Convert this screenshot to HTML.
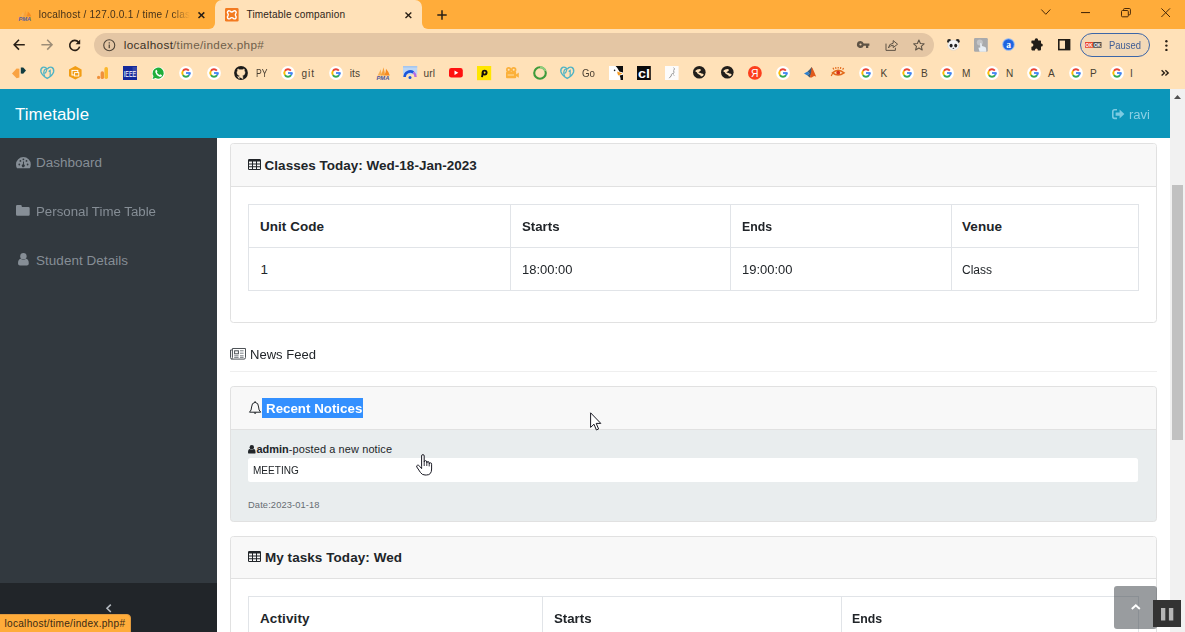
<!DOCTYPE html>
<html lang="en">
<head>
<meta charset="utf-8">
<title>Timetable companion</title>
<style>
html,body{margin:0;padding:0;}
body{width:1185px;height:632px;overflow:hidden;position:relative;background:#fff;font-family:"Liberation Sans",sans-serif;}
.a{position:absolute;box-sizing:border-box;}
.t{position:absolute;white-space:pre;font-family:"Liberation Sans",sans-serif;}
svg{position:absolute;overflow:visible;}
/* chrome */
#tabstrip{left:0;top:0;width:1185px;height:29px;background:#ffac3a;}
#toolbar{left:0;top:29px;width:1185px;height:59.5px;background:#ffe1b8;}
#tab2{left:214.5px;top:0;width:207.5px;height:29.5px;background:#ffe1b8;border-radius:7px 7px 0 0;}
#omni{left:94px;top:33px;width:840px;height:24px;border-radius:12px;background:#e4c6a4;}
#paused{left:1080px;top:33px;width:70px;height:24px;border-radius:12px;background:#f3d9b7;border:1px solid #3c66a8;}
/* page */
#navbar{left:0;top:88.5px;width:1170px;height:49.5px;background:#0c96ba;}
#sidebar{left:0;top:138px;width:217px;height:494px;background:#32393f;}
#sbfoot{left:0;top:583px;width:217px;height:49px;background:#212529;}
.card{border:1px solid #e1e1e1;border-radius:3.5px;background:#fff;overflow:hidden;}
.ch{left:0;top:0;width:100%;background:#f8f8f8;border-bottom:1px solid #e1e1e1;}
.tbl{border:1px solid #e1e4e8;}
.vl{width:1px;background:#e1e4e8;}
.hl{height:1px;background:#e1e4e8;}
#scroll{left:1170px;top:88.5px;width:15px;height:544px;background:#f1f1f1;}
#thumb{left:1172px;top:185px;width:11px;height:254.5px;background:#c1c1c1;}
#status{left:-1px;top:614px;width:132px;height:20px;background:#ffac3a;border:1px solid #e09a3e;border-radius:0 4px 0 0;}
#totop{left:1114px;top:586px;width:43px;height:43px;border-radius:3px;background:rgba(52,58,64,.5);}
#pause{left:1153px;top:600px;width:28px;height:27px;background:#333;}
</style>
</head>
<body>
<!-- browser chrome -->
<div class="a" id="tabstrip"></div>
<div class="a" id="toolbar"></div>
<div class="a" id="tab2"></div>
<div class="a" style="left:208.5px;top:23px;width:6px;height:6px;background:#ffe1b8;"></div>
<div class="a" style="left:208.5px;top:23px;width:6px;height:6px;background:#ffac3a;border-radius:0 0 6px 0;"></div>
<div class="a" style="left:422px;top:23px;width:6px;height:6px;background:#ffe1b8;"></div>
<div class="a" style="left:422px;top:23px;width:6px;height:6px;background:#ffac3a;border-radius:0 0 0 6px;"></div>
<div class="a" id="omni"></div>
<div class="a" id="paused"></div>

<!-- page -->
<div class="a" id="navbar"></div>
<div class="a" id="sidebar"></div>
<div class="a" id="sbfoot"></div>

<!-- card 1 -->
<div class="a card" style="left:230px;top:143px;width:927px;height:179.5px;">
  <div class="a ch" style="height:43px;"></div>
</div>
<div class="a tbl" style="left:248px;top:204px;width:891px;height:87px;"></div>
<div class="a hl" style="left:248px;top:246.5px;width:891px;height:1.5px;"></div>
<div class="a vl" style="left:510px;top:204px;height:87px;"></div>
<div class="a vl" style="left:730px;top:204px;height:87px;"></div>
<div class="a vl" style="left:951px;top:204px;height:87px;"></div>

<!-- news feed -->
<div class="a" style="left:230px;top:371px;width:927px;height:1px;background:#efefef;"></div>

<!-- card 2 -->
<div class="a card" style="left:230px;top:386px;width:927px;height:135.5px;background:#e9edee;">
  <div class="a ch" style="height:43.2px;"></div>
</div>
<div class="a" style="left:262px;top:397.5px;width:100.75px;height:20.5px;background:#3390ff;"></div>
<div class="a" style="left:248px;top:457.5px;width:890px;height:24.5px;background:#fff;border-radius:2.5px;"></div>

<!-- card 3 -->
<div class="a card" style="left:230px;top:536px;width:927px;height:140px;border-radius:3.5px 3.5px 0 0;">
  <div class="a ch" style="height:42.2px;"></div>
</div>
<div class="a tbl" style="left:248px;top:596px;width:891px;height:60px;"></div>
<div class="a vl" style="left:542px;top:596px;height:40px;"></div>
<div class="a vl" style="left:841px;top:596px;height:40px;"></div>

<!-- scrollbar -->
<div class="a" id="scroll"></div>
<div class="a" id="thumb"></div>

<!-- floating -->
<div class="a" id="totop"></div>
<div class="a" id="pause"></div>
<div class="a" id="status"></div>

<svg style="left:1040.5px;top:9px" width="10" height="6" viewBox="0 0 10 6"><path d="M0.3 0.5 L4.8 5.3 L9.3 0.5" fill="none" stroke="#4a2a08" stroke-width="1"/></svg>
<svg style="left:1081px;top:11.7px" width="9" height="1.2" viewBox="0 0 9 1.2"><rect width="9" height="1.1" fill="#4a2a08"/></svg>
<svg style="left:1120.5px;top:7.5px" width="10" height="9.5" viewBox="0 0 10 9.5"><rect x="0.5" y="2.5" width="6.8" height="6.3" rx="1" fill="none" stroke="#4a2a08" stroke-width="1"/><path d="M2.6 2.3 V1.5 Q2.6 0.5 3.6 0.5 H8.4 Q9.4 0.5 9.4 1.5 V5.8 Q9.4 6.8 8.4 6.8 H7.6" fill="none" stroke="#4a2a08" stroke-width="1"/></svg>
<svg style="left:1160.5px;top:7.5px" width="9.5" height="9.5" viewBox="0 0 9.5 9.5"><path d="M0.4 0.4 L9 9 M9 0.4 L0.4 9" stroke="#4a2a08" stroke-width="1" fill="none"/></svg>
<svg style="left:17.5px;top:10px" width="14" height="11" viewBox="0 0 14 11"><path d="M2.4 6.6 Q4.4 3.4 5 1.6 Q5.8 4.2 5.8 6.6Z" fill="#f9b155"/><path d="M5.2 6.6 Q7 2.6 7.4 0.2 Q8.6 3.6 8.8 6.6Z" fill="#f6a13a"/><path d="M8.4 6.6 Q10 3.4 9.8 1.6 Q12.8 4.2 13.4 6.6Z" fill="#f78b1f"/><text x="0.4" y="10.6" font-family="Liberation Sans, sans-serif" font-size="4.6" font-weight="700" font-style="italic" fill="#5a5f9e" textLength="12.8" lengthAdjust="spacingAndGlyphs">PMA</text></svg>
<svg style="left:198px;top:11.7px" width="7" height="6.5" viewBox="0 0 7 6.5"><path d="M0.5 0.4 L6.3 6 M6.3 0.4 L0.5 6" stroke="#2a2016" stroke-width="1.5" fill="none"/></svg>
<svg style="left:225px;top:7.9px" width="13.6" height="13.6" viewBox="0 0 13.6 13.6"><rect width="13.6" height="13.6" rx="1.4" fill="#f37a20"/><path d="M2.6 3.6 Q3.6 2.2 5 3 Q6.8 4.9 8.6 3 Q10 2.2 11 3.6 Q11.6 4.8 10.6 5.8 Q10.1 6.8 10.6 7.8 Q11.6 8.8 11 10 Q10 11.4 8.6 10.6 Q6.8 8.7 5 10.6 Q3.6 11.4 2.6 10 Q2 8.8 3 7.8 Q3.5 6.8 3 5.8 Q2 4.8 2.6 3.6Z" fill="none" stroke="#fff" stroke-width="1.4"/></svg>
<svg style="left:405px;top:11.7px" width="7" height="6.5" viewBox="0 0 7 6.5"><path d="M0.5 0.4 L6.3 6 M6.3 0.4 L0.5 6" stroke="#2a2016" stroke-width="1.4" fill="none"/></svg>
<svg style="left:436.5px;top:10px" width="10" height="10" viewBox="0 0 10 10"><path d="M5 0.3 V9.7 M0.3 5 H9.7" stroke="#2a2016" stroke-width="1.5" fill="none"/></svg>
<svg style="left:13px;top:39.4px" width="12.2" height="11.4" viewBox="0 0 12.2 11.4"><path d="M11.8 5.7 H1.6 M6 0.8 L1.2 5.7 L6 10.6" stroke="#2a2016" stroke-width="1.6" fill="none"/></svg>
<svg style="left:41px;top:39.4px" width="12.2" height="11.4" viewBox="0 0 12.2 11.4"><path d="M0.4 5.7 H10.6 M6.2 0.8 L11 5.7 L6.2 10.6" stroke="#9d8d77" stroke-width="1.6" fill="none"/></svg>
<svg style="left:68px;top:38.8px" width="13" height="13" viewBox="0 0 13 13"><path d="M10.6 3.2 A5 5 0 1 0 11.6 7.6" stroke="#2a2016" stroke-width="1.6" fill="none"/><path d="M12.2 0.6 V5.2 H7.6Z" fill="#2a2016"/></svg>
<svg style="left:102.5px;top:38.8px" width="12.5" height="12.5" viewBox="0 0 12.5 12.5"><circle cx="6.25" cy="6.25" r="5.5" fill="none" stroke="#4d4336" stroke-width="1.1"/><rect x="5.65" y="5.5" width="1.2" height="3.7" fill="#4d4336"/><rect x="5.65" y="3.3" width="1.2" height="1.2" fill="#4d4336"/></svg>
<svg style="left:857px;top:41px" width="12.5" height="7.2" viewBox="0 0 12.5 7.2"><path fill-rule="evenodd" d="M3.5 0 A3.5 3.5 0 0 1 6.7 2.4 H12.4 V4.7 H11.3 V6.9 H9 V4.7 H6.7 A3.5 3.5 0 1 1 3.5 0Z M2.4 3.5 a1.1 1.1 0 1 0 2.2 0 a1.1 1.1 0 1 0 -2.2 0Z" fill="#5e5345"/></svg>
<svg style="left:885px;top:39px" width="13.2" height="12.2" viewBox="0 0 13.2 12.2"><path d="M1 4.6 V11.4 H10.4 V8.8" fill="none" stroke="#5e5345" stroke-width="1"/><path d="M3.4 9 Q3.8 4.6 8.2 4.2 V1.6 L12.6 5.2 L8.2 8.6 V6.2 Q5.2 6.2 3.4 9Z" fill="none" stroke="#5e5345" stroke-width="1"/></svg>
<svg style="left:912.7px;top:39.2px" width="11.8" height="11.6" viewBox="0 0 11.8 11.6"><path d="M5.9 1 L7.4 4.5 L11.1 4.8 L8.3 7.3 L9.2 11 L5.9 9 L2.6 11 L3.5 7.3 L0.7 4.8 L4.4 4.5Z" fill="none" stroke="#5e5345" stroke-width="1.1" stroke-linejoin="round"/></svg>
<svg style="left:947.3px;top:39.2px" width="12.8" height="11.4" viewBox="0 0 12.8 11.4"><circle cx="2.2" cy="2.2" r="2.1" fill="#222"/><circle cx="10.6" cy="2.2" r="2.1" fill="#222"/><ellipse cx="6.4" cy="6.2" rx="5.6" ry="5.1" fill="#f4f4f4" stroke="#cfcfcf" stroke-width="0.4"/><ellipse cx="4.1" cy="6.6" rx="1.5" ry="1.9" fill="#222"/><ellipse cx="8.7" cy="6.6" rx="1.5" ry="1.9" fill="#222"/><ellipse cx="6.4" cy="9.3" rx="0.9" ry="0.6" fill="#444"/></svg>
<svg style="left:974.2px;top:38px" width="13.8" height="13.8" viewBox="0 0 13.8 13.8"><rect width="13.8" height="13.8" rx="1.2" fill="#a9aaac"/><circle cx="5.8" cy="4.4" r="3" fill="#c4c5c7"/><path d="M6.2 5.2 Q7.2 4.6 7.6 5.8 L8 8 L11.2 9 Q12.4 9.6 12.2 13.8 H5.6 Q4.6 11 4.4 9.8 Q5 9 6.2 9.8Z" fill="#e8eef4"/></svg>
<svg style="left:1002.3px;top:38.3px" width="13" height="13" viewBox="0 0 13 13"><circle cx="6.5" cy="6.5" r="6.3" fill="#8fb6f2"/><circle cx="6.5" cy="6.5" r="5.3" fill="#1d64e0"/><text x="6.5" y="9.6" text-anchor="middle" font-family="Liberation Serif, serif" font-size="9.5" font-weight="700" fill="#fff">a</text></svg>
<svg style="left:1030.3px;top:38.4px" width="12.8" height="12.8" viewBox="0 0 12.8 12.8"><path d="M4.6 2.4 Q4.6 0.2 6.4 0.2 Q8.2 0.2 8.2 2.4 H10.4 Q11 2.4 11 3 V5.4 Q12.8 5.2 12.8 7 Q12.8 8.8 11 8.6 V11.6 Q11 12.4 10.2 12.4 H7.8 Q8 10.4 6.4 10.4 Q4.8 10.4 5 12.4 H2.2 Q1.4 12.4 1.4 11.6 V8.8 Q3.4 9 3.4 7 Q3.4 5 1.4 5.2 V3 Q1.4 2.4 2 2.4Z" fill="#221d17"/></svg>
<svg style="left:1058.2px;top:39px" width="12.4" height="11.4" viewBox="0 0 12.4 11.4"><rect x="0.8" y="0.8" width="10.8" height="9.8" fill="none" stroke="#221d17" stroke-width="1.6"/><rect x="7" y="0.8" width="4.6" height="9.8" fill="#221d17"/></svg>
<svg style="left:1084.5px;top:42px" width="16.5" height="5.8" viewBox="0 0 16.5 5.8"><rect width="8.2" height="5.8" fill="#e8442b"/><rect x="8.2" width="8.3" height="5.8" fill="#4a4a4a"/><text x="0.6" y="4.7" font-family="Liberation Sans, sans-serif" font-size="4.6" font-weight="700" fill="#fff">OK</text><text x="8.9" y="4.7" font-family="Liberation Sans, sans-serif" font-size="4.6" font-weight="700" fill="#fff">OK</text></svg>
<svg style="left:1165px;top:39.5px" width="3" height="11.5" viewBox="0 0 3 11.5"><circle cx="1.4" cy="1.3" r="1.2" fill="#2a2016"/><circle cx="1.4" cy="5.6" r="1.2" fill="#2a2016"/><circle cx="1.4" cy="9.9" r="1.2" fill="#2a2016"/></svg>
<svg style="left:178.75px;top:65.75px" width="14" height="14" viewBox="0 0 14 14"><circle cx="7" cy="7" r="6.9" fill="#fff"/><path d="M9.83 4.62 A3.7 3.7 0 0 0 3.97 4.88" fill="none" stroke="#ea4335" stroke-width="1.9"/><path d="M3.97 4.88 A3.7 3.7 0 0 0 3.97 9.12" fill="none" stroke="#fbbc05" stroke-width="1.9"/><path d="M3.97 9.12 A3.7 3.7 0 0 0 10.03 9.12" fill="none" stroke="#34a853" stroke-width="1.9"/><path d="M10.03 9.12 A3.7 3.7 0 0 0 10.70 7.00" fill="none" stroke="#4285f4" stroke-width="1.9"/><rect x="7" y="6.1" width="4.6" height="1.8" fill="#4285f4"/></svg>
<svg style="left:206.6px;top:65.75px" width="14" height="14" viewBox="0 0 14 14"><circle cx="7" cy="7" r="6.9" fill="#fff"/><path d="M9.83 4.62 A3.7 3.7 0 0 0 3.97 4.88" fill="none" stroke="#ea4335" stroke-width="1.9"/><path d="M3.97 4.88 A3.7 3.7 0 0 0 3.97 9.12" fill="none" stroke="#fbbc05" stroke-width="1.9"/><path d="M3.97 9.12 A3.7 3.7 0 0 0 10.03 9.12" fill="none" stroke="#34a853" stroke-width="1.9"/><path d="M10.03 9.12 A3.7 3.7 0 0 0 10.70 7.00" fill="none" stroke="#4285f4" stroke-width="1.9"/><rect x="7" y="6.1" width="4.6" height="1.8" fill="#4285f4"/></svg>
<svg style="left:281px;top:65.75px" width="14" height="14" viewBox="0 0 14 14"><circle cx="7" cy="7" r="6.9" fill="#fff"/><path d="M9.83 4.62 A3.7 3.7 0 0 0 3.97 4.88" fill="none" stroke="#ea4335" stroke-width="1.9"/><path d="M3.97 4.88 A3.7 3.7 0 0 0 3.97 9.12" fill="none" stroke="#fbbc05" stroke-width="1.9"/><path d="M3.97 9.12 A3.7 3.7 0 0 0 10.03 9.12" fill="none" stroke="#34a853" stroke-width="1.9"/><path d="M10.03 9.12 A3.7 3.7 0 0 0 10.70 7.00" fill="none" stroke="#4285f4" stroke-width="1.9"/><rect x="7" y="6.1" width="4.6" height="1.8" fill="#4285f4"/></svg>
<svg style="left:328.75px;top:65.75px" width="14" height="14" viewBox="0 0 14 14"><circle cx="7" cy="7" r="6.9" fill="#fff"/><path d="M9.83 4.62 A3.7 3.7 0 0 0 3.97 4.88" fill="none" stroke="#ea4335" stroke-width="1.9"/><path d="M3.97 4.88 A3.7 3.7 0 0 0 3.97 9.12" fill="none" stroke="#fbbc05" stroke-width="1.9"/><path d="M3.97 9.12 A3.7 3.7 0 0 0 10.03 9.12" fill="none" stroke="#34a853" stroke-width="1.9"/><path d="M10.03 9.12 A3.7 3.7 0 0 0 10.70 7.00" fill="none" stroke="#4285f4" stroke-width="1.9"/><rect x="7" y="6.1" width="4.6" height="1.8" fill="#4285f4"/></svg>
<svg style="left:775.5px;top:65.75px" width="14" height="14" viewBox="0 0 14 14"><circle cx="7" cy="7" r="6.9" fill="#fff"/><path d="M9.83 4.62 A3.7 3.7 0 0 0 3.97 4.88" fill="none" stroke="#ea4335" stroke-width="1.9"/><path d="M3.97 4.88 A3.7 3.7 0 0 0 3.97 9.12" fill="none" stroke="#fbbc05" stroke-width="1.9"/><path d="M3.97 9.12 A3.7 3.7 0 0 0 10.03 9.12" fill="none" stroke="#34a853" stroke-width="1.9"/><path d="M10.03 9.12 A3.7 3.7 0 0 0 10.70 7.00" fill="none" stroke="#4285f4" stroke-width="1.9"/><rect x="7" y="6.1" width="4.6" height="1.8" fill="#4285f4"/></svg>
<svg style="left:859px;top:65.75px" width="14" height="14" viewBox="0 0 14 14"><circle cx="7" cy="7" r="6.9" fill="#fff"/><path d="M9.83 4.62 A3.7 3.7 0 0 0 3.97 4.88" fill="none" stroke="#ea4335" stroke-width="1.9"/><path d="M3.97 4.88 A3.7 3.7 0 0 0 3.97 9.12" fill="none" stroke="#fbbc05" stroke-width="1.9"/><path d="M3.97 9.12 A3.7 3.7 0 0 0 10.03 9.12" fill="none" stroke="#34a853" stroke-width="1.9"/><path d="M10.03 9.12 A3.7 3.7 0 0 0 10.70 7.00" fill="none" stroke="#4285f4" stroke-width="1.9"/><rect x="7" y="6.1" width="4.6" height="1.8" fill="#4285f4"/></svg>
<svg style="left:899.75px;top:65.75px" width="14" height="14" viewBox="0 0 14 14"><circle cx="7" cy="7" r="6.9" fill="#fff"/><path d="M9.83 4.62 A3.7 3.7 0 0 0 3.97 4.88" fill="none" stroke="#ea4335" stroke-width="1.9"/><path d="M3.97 4.88 A3.7 3.7 0 0 0 3.97 9.12" fill="none" stroke="#fbbc05" stroke-width="1.9"/><path d="M3.97 9.12 A3.7 3.7 0 0 0 10.03 9.12" fill="none" stroke="#34a853" stroke-width="1.9"/><path d="M10.03 9.12 A3.7 3.7 0 0 0 10.70 7.00" fill="none" stroke="#4285f4" stroke-width="1.9"/><rect x="7" y="6.1" width="4.6" height="1.8" fill="#4285f4"/></svg>
<svg style="left:940.4px;top:65.75px" width="14" height="14" viewBox="0 0 14 14"><circle cx="7" cy="7" r="6.9" fill="#fff"/><path d="M9.83 4.62 A3.7 3.7 0 0 0 3.97 4.88" fill="none" stroke="#ea4335" stroke-width="1.9"/><path d="M3.97 4.88 A3.7 3.7 0 0 0 3.97 9.12" fill="none" stroke="#fbbc05" stroke-width="1.9"/><path d="M3.97 9.12 A3.7 3.7 0 0 0 10.03 9.12" fill="none" stroke="#34a853" stroke-width="1.9"/><path d="M10.03 9.12 A3.7 3.7 0 0 0 10.70 7.00" fill="none" stroke="#4285f4" stroke-width="1.9"/><rect x="7" y="6.1" width="4.6" height="1.8" fill="#4285f4"/></svg>
<svg style="left:984.75px;top:65.75px" width="14" height="14" viewBox="0 0 14 14"><circle cx="7" cy="7" r="6.9" fill="#fff"/><path d="M9.83 4.62 A3.7 3.7 0 0 0 3.97 4.88" fill="none" stroke="#ea4335" stroke-width="1.9"/><path d="M3.97 4.88 A3.7 3.7 0 0 0 3.97 9.12" fill="none" stroke="#fbbc05" stroke-width="1.9"/><path d="M3.97 9.12 A3.7 3.7 0 0 0 10.03 9.12" fill="none" stroke="#34a853" stroke-width="1.9"/><path d="M10.03 9.12 A3.7 3.7 0 0 0 10.70 7.00" fill="none" stroke="#4285f4" stroke-width="1.9"/><rect x="7" y="6.1" width="4.6" height="1.8" fill="#4285f4"/></svg>
<svg style="left:1026.5px;top:65.75px" width="14" height="14" viewBox="0 0 14 14"><circle cx="7" cy="7" r="6.9" fill="#fff"/><path d="M9.83 4.62 A3.7 3.7 0 0 0 3.97 4.88" fill="none" stroke="#ea4335" stroke-width="1.9"/><path d="M3.97 4.88 A3.7 3.7 0 0 0 3.97 9.12" fill="none" stroke="#fbbc05" stroke-width="1.9"/><path d="M3.97 9.12 A3.7 3.7 0 0 0 10.03 9.12" fill="none" stroke="#34a853" stroke-width="1.9"/><path d="M10.03 9.12 A3.7 3.7 0 0 0 10.70 7.00" fill="none" stroke="#4285f4" stroke-width="1.9"/><rect x="7" y="6.1" width="4.6" height="1.8" fill="#4285f4"/></svg>
<svg style="left:1068.75px;top:65.75px" width="14" height="14" viewBox="0 0 14 14"><circle cx="7" cy="7" r="6.9" fill="#fff"/><path d="M9.83 4.62 A3.7 3.7 0 0 0 3.97 4.88" fill="none" stroke="#ea4335" stroke-width="1.9"/><path d="M3.97 4.88 A3.7 3.7 0 0 0 3.97 9.12" fill="none" stroke="#fbbc05" stroke-width="1.9"/><path d="M3.97 9.12 A3.7 3.7 0 0 0 10.03 9.12" fill="none" stroke="#34a853" stroke-width="1.9"/><path d="M10.03 9.12 A3.7 3.7 0 0 0 10.70 7.00" fill="none" stroke="#4285f4" stroke-width="1.9"/><rect x="7" y="6.1" width="4.6" height="1.8" fill="#4285f4"/></svg>
<svg style="left:1109.6px;top:65.75px" width="14" height="14" viewBox="0 0 14 14"><circle cx="7" cy="7" r="6.9" fill="#fff"/><path d="M9.83 4.62 A3.7 3.7 0 0 0 3.97 4.88" fill="none" stroke="#ea4335" stroke-width="1.9"/><path d="M3.97 4.88 A3.7 3.7 0 0 0 3.97 9.12" fill="none" stroke="#fbbc05" stroke-width="1.9"/><path d="M3.97 9.12 A3.7 3.7 0 0 0 10.03 9.12" fill="none" stroke="#34a853" stroke-width="1.9"/><path d="M10.03 9.12 A3.7 3.7 0 0 0 10.70 7.00" fill="none" stroke="#4285f4" stroke-width="1.9"/><rect x="7" y="6.1" width="4.6" height="1.8" fill="#4285f4"/></svg>
<svg style="left:12px;top:67px" width="14.5" height="11.5" viewBox="0 0 14.5 11.5"><path d="M0 6.4 L4.6 1.4 L7.4 1.8 L7.4 10.6 L4.6 11.2Z" fill="#f9a343"/><path d="M8.8 0.6 L11.2 0.4 L14 3.6 L11.2 6.8 L8.8 6.6Z" fill="#123c40"/></svg>
<svg style="left:40px;top:66px" width="14.5" height="13.2" viewBox="0 0 14.5 13.2"><path d="M7.2 3.2 Q5.2 0.4 2.6 1.4 Q0.2 2.8 1 6 Q2.2 9.6 7.2 12.4 Q12.4 9.6 13.6 6 Q14.2 2.6 11.8 1.4 Q9.2 0.4 7.2 3.2" fill="none" stroke="#4fb3c4" stroke-width="1.4"/><path d="M4.6 10 Q2.8 6.4 4.8 3.6 Q6.2 2.6 6.6 4.4 Q6 7 4.6 7.4 M8.6 5.4 L10.2 4.4 V10.4" fill="none" stroke="#4fb3c4" stroke-width="1.2"/></svg>
<svg style="left:560px;top:66px" width="14.5" height="13.2" viewBox="0 0 14.5 13.2"><path d="M7.2 3.2 Q5.2 0.4 2.6 1.4 Q0.2 2.8 1 6 Q2.2 9.6 7.2 12.4 Q12.4 9.6 13.6 6 Q14.2 2.6 11.8 1.4 Q9.2 0.4 7.2 3.2" fill="none" stroke="#4fb3c4" stroke-width="1.4"/><path d="M4.6 10 Q2.8 6.4 4.8 3.6 Q6.2 2.6 6.6 4.4 Q6 7 4.6 7.4 M8.6 5.4 L10.2 4.4 V10.4" fill="none" stroke="#4fb3c4" stroke-width="1.2"/></svg>
<svg style="left:68.5px;top:66px" width="12.6" height="13.6" viewBox="0 0 12.6 13.6"><path d="M6.3 0 L12.6 3.4 V10.2 L6.3 13.6 L0 10.2 V3.4Z" fill="#f29d14"/><rect x="3" y="4.4" width="5.8" height="4.6" fill="none" stroke="#fff" stroke-width="1"/><rect x="5.6" y="6.6" width="4.2" height="3.4" fill="#f29d14" stroke="#fff" stroke-width="0.9"/></svg>
<svg style="left:97px;top:66.7px" width="11.2" height="12" viewBox="0 0 11.2 12"><rect x="7.4" y="0" width="3.6" height="12" rx="1.7" fill="#fbb72c"/><rect x="3.6" y="4.3" width="3.4" height="7.7" rx="1.6" fill="#f0913a"/><circle cx="1.6" cy="10.4" r="1.6" fill="#f0913a"/></svg>
<svg style="left:123px;top:66px" width="14" height="14" viewBox="0 0 14 14"><rect width="14" height="14" fill="#15299a"/><rect x="9.5" y="1" width="4.5" height="10" fill="#5a68b8" opacity="0.45"/><text x="0.8" y="11.2" font-family="Liberation Sans, sans-serif" font-size="9.6" font-weight="400" fill="#fff" textLength="12.4" lengthAdjust="spacingAndGlyphs">IEEE</text></svg>
<svg style="left:151px;top:65.8px" width="14" height="14.4" viewBox="0 0 14 14.4"><path d="M0.6 13.9 L1.7 10.4 A6.4 6.4 0 1 1 4.3 12.9Z" fill="#fff"/><path d="M1.6 12.9 L2.5 10.2 A5.6 5.6 0 1 1 4.6 12.1Z" fill="#1fae3a"/><path d="M4.9 4 Q5.6 3.4 6 4.4 L6.4 5.4 Q6.5 5.9 5.9 6.4 Q6.8 8.2 8.6 8.9 Q9.2 8.2 9.6 8.4 L10.8 9 Q11.2 9.4 10.6 10.2 Q9.6 11.2 7.6 10.2 Q5.2 8.9 4.4 6.4 Q4 4.8 4.9 4Z" fill="#fff"/></svg>
<svg style="left:234px;top:65.8px" width="14" height="14" viewBox="0 0 14 14"><circle cx="7" cy="7" r="6.9" fill="#1b1a19"/><path d="M5.2 13 V10.9 Q3.4 11.3 2.9 9.9 M5.2 11 Q5.2 10 5.7 9.6 Q3 9.2 3 6.6 Q3 5.6 3.7 4.8 Q3.4 3.8 3.8 3 Q4.8 3 5.7 3.8 Q7 3.5 8.3 3.8 Q9.2 3 10.2 3 Q10.6 3.8 10.3 4.8 Q11 5.6 11 6.6 Q11 9.2 8.3 9.6 Q8.8 10 8.8 11 V13" fill="#ffe1b8" stroke="#ffe1b8" stroke-width="0.5"/></svg>
<svg style="left:375.5px;top:66.5px" width="14" height="13" viewBox="0 0 14 13"><path d="M1.6 8.6 Q4 4.4 4.6 2.2 Q5.6 5.6 5.6 8.6Z" fill="#f9b155"/><path d="M4.8 8.6 Q7 3.6 7.4 0.2 Q8.8 4.6 9 8.6Z" fill="#f6a13a"/><path d="M8.4 8.6 Q10.2 4.4 10 1.8 Q13.2 5.4 13.8 8.6Z" fill="#f78b1f"/><text x="0.4" y="12.7" font-family="Liberation Sans, sans-serif" font-size="4.8" font-weight="700" font-style="italic" fill="#4a5296" textLength="13" lengthAdjust="spacingAndGlyphs">PMA</text></svg>
<svg style="left:402.5px;top:66px" width="14.2" height="14" viewBox="0 0 14.2 14"><rect width="14.2" height="8.4" fill="#bcd6f5"/><rect width="14.2" height="1.6" fill="#a5c6ef"/><path d="M1.6 11 A5.6 5.6 0 0 1 10.4 6.4" fill="none" stroke="#1a56db" stroke-width="2.6"/><path d="M10.4 6.4 A5.6 5.6 0 0 1 12.6 11" fill="none" stroke="#b36be0" stroke-width="2.4"/><circle cx="7" cy="11.4" r="1.5" fill="#1a56db"/></svg>
<svg style="left:449.2px;top:68.2px" width="13.8" height="9.6" viewBox="0 0 13.8 9.6"><rect width="13.8" height="9.6" rx="2.4" fill="#ff1010"/><path d="M5.5 2.6 L9.3 4.8 L5.5 7Z" fill="#fff"/></svg>
<svg style="left:477px;top:65.8px" width="14.2" height="14.2" viewBox="0 0 14.2 14.2"><rect width="14.2" height="14.2" fill="#ffe600"/><circle cx="7.6" cy="6.6" r="2" fill="none" stroke="#14110b" stroke-width="1.9"/><path d="M5 11.2 L5.9 6.4" stroke="#14110b" stroke-width="1.9" fill="none"/></svg>
<svg style="left:505px;top:67.3px" width="14" height="11.4" viewBox="0 0 14 11.4"><circle cx="3.7" cy="2.7" r="2.7" fill="#fbb03a"/><circle cx="8.7" cy="2.7" r="2.7" fill="#fbb03a"/><circle cx="3.7" cy="2.7" r="1" fill="#ffe1b8"/><circle cx="8.7" cy="2.7" r="1" fill="#ffe1b8"/><rect x="1" y="4.8" width="10.2" height="6.4" rx="1" fill="#fbb03a"/><path d="M11 7.6 L13.8 5.6 V10.8 L11 9Z" fill="#fbb03a"/><rect x="2.6" y="7" width="6.4" height="2" fill="#fdc66e"/></svg>
<svg style="left:533px;top:65.8px" width="14" height="14" viewBox="0 0 14 14"><circle cx="7" cy="7" r="5.8" fill="none" stroke="#3f9b3b" stroke-width="2.1"/><path d="M7 1.2 A5.8 5.8 0 0 1 12.4 5" fill="none" stroke="#8fce7e" stroke-width="2.1"/></svg>
<svg style="left:609px;top:66px" width="14" height="14" viewBox="0 0 14 14"><rect width="14" height="14" fill="#fff"/><path d="M6.6 0 H14 V6.6 L10.4 5.4 Q9 2.2 6.6 0Z" fill="#0d0d0d"/><path d="M10.6 9.6 L14 8.8 V14 H11.6 Q11.6 11.6 10.6 9.6Z" fill="#0d0d0d"/><path d="M8.2 5.6 L13.6 7.6 L9.4 9.6 Q8.2 7.8 8.2 5.6Z" fill="#f59a23"/><circle cx="5.6" cy="4.4" r="0.8" fill="#222"/></svg>
<svg style="left:637px;top:66px" width="13.8" height="14" viewBox="0 0 13.8 14"><rect width="13.8" height="14" fill="#0a0a0a"/><text x="0.9" y="11.9" font-family="Liberation Sans, sans-serif" font-size="12.6" font-weight="700" fill="#fff" textLength="12" lengthAdjust="spacingAndGlyphs">cl</text></svg>
<svg style="left:664.7px;top:66px" width="13.6" height="14" viewBox="0 0 13.6 14"><rect width="13.6" height="14" fill="#fdfcfb"/><path d="M8.6 1.6 Q10 2.4 9 4.2 M8.6 4.4 Q9.6 6.6 8 8 M7.6 7.2 Q5.8 8.6 6.2 10.2 M6 10 L4.2 12.2 M8.2 8.4 L9.2 9.6" fill="none" stroke="#8d8d8d" stroke-width="0.9"/></svg>
<svg style="left:692.95px;top:66.45px" width="12.6" height="12.6" viewBox="0 0 12.6 12.6"><circle cx="6.3" cy="6.3" r="6.3" fill="#221f1b"/><path d="M2.2 5 Q4.4 2.6 7.6 3.2 Q8.6 4.6 6.6 5.4 Q5.4 5.8 5.6 6.8 Q7.4 6.4 8.4 7.4 Q10.2 7.4 10.8 8.8 Q10 10.4 8 10.6 Q7.6 8.8 6 8.4 Q4 7.8 3.8 6.2 Q2.6 6 2.2 5Z" fill="#ffe1b8"/></svg>
<svg style="left:720.7px;top:66.45px" width="12.6" height="12.6" viewBox="0 0 12.6 12.6"><circle cx="6.3" cy="6.3" r="6.3" fill="#221f1b"/><path d="M2.2 5 Q4.4 2.6 7.6 3.2 Q8.6 4.6 6.6 5.4 Q5.4 5.8 5.6 6.8 Q7.4 6.4 8.4 7.4 Q10.2 7.4 10.8 8.8 Q10 10.4 8 10.6 Q7.6 8.8 6 8.4 Q4 7.8 3.8 6.2 Q2.6 6 2.2 5Z" fill="#ffe1b8"/></svg>
<svg style="left:747.85px;top:65.85px" width="13.8" height="13.8" viewBox="0 0 13.8 13.8"><circle cx="6.9" cy="6.9" r="6.9" fill="#fc3f1d"/><text x="6.7" y="10.7" text-anchor="middle" font-family="Liberation Sans, sans-serif" font-size="10.4" font-weight="400" fill="#fff">Я</text></svg>
<svg style="left:804px;top:66.7px" width="12.2" height="10.8" viewBox="0 0 12.2 10.8"><path d="M0 6.4 L3.6 4.6 L5.6 6.6 L3.4 8.6Z" fill="#2a7fd0"/><path d="M3.6 4.6 Q6 2.6 7.6 0 Q8.4 1.6 8.8 3.6 L5.8 10.6 L3.4 8.6 L5.6 6.6Z" fill="#3b5a78"/><path d="M7.6 0 Q9.2 2 12.2 9.8 Q10.4 8.4 9.2 9.4 Q7.6 10.8 5.8 10.6 Q7.6 5.4 7.6 0Z" fill="#e0591b"/></svg>
<svg style="left:831px;top:67px" width="14" height="9.8" viewBox="0 0 14 9.8"><path d="M1.6 5.8 Q7 1 13 5.8 Q7 10.2 1.6 5.8Z" fill="none" stroke="#e2691a" stroke-width="1.6"/><circle cx="7.2" cy="5.7" r="1.9" fill="#d8321a"/><path d="M1.8 6 L0.2 9 M2.8 2.6 L2 0.8 M5 1.8 L4.6 0.2 M7.2 1.4 V0 M9.4 1.8 L9.8 0.2 M11.6 2.6 L12.6 1" stroke="#e2691a" stroke-width="1.2" fill="none"/></svg>
<svg style="left:1161.3px;top:70px" width="8" height="5.8" viewBox="0 0 8 5.8"><path d="M0.6 0.3 L3.4 2.9 L0.6 5.5 M4.4 0.3 L7.2 2.9 L4.4 5.5" stroke="#2a2016" stroke-width="1.4" fill="none"/></svg>
<svg style="left:15.5px;top:157.4px" width="14.8" height="11.3" viewBox="0 0 14.8 11.3"><path fill-rule="evenodd" d="M0 7.4 A7.4 7.4 0 0 1 14.8 7.4 Q14.8 9.6 13.7 11.3 H1.1 Q0 9.6 0 7.4Z M2.4 7.5 a0.9 0.9 0 1 0 1.8 0 a0.9 0.9 0 1 0 -1.8 0Z M3.5 3.9 a0.9 0.9 0 1 0 1.8 0 a0.9 0.9 0 1 0 -1.8 0Z M9.6 3.9 a0.9 0.9 0 1 0 1.8 0 a0.9 0.9 0 1 0 -1.8 0Z M10.7 7.5 a0.9 0.9 0 1 0 1.8 0 a0.9 0.9 0 1 0 -1.8 0Z M6.5 2.3 a0.9 0.9 0 1 0 1.8 0 a0.9 0.9 0 1 0 -1.8 0Z M7.1 4.4 L6.9 7.2 a1.5 1.5 0 1 0 1 0.1 L8 4.5Z" fill="#868e96"/></svg>
<svg style="left:16px;top:205.2px" width="13.7" height="10.8" viewBox="0 0 13.7 10.8"><path d="M0 1.2 Q0 0 1.2 0 H4.6 Q5.8 0 5.8 1.2 V2 H12.5 Q13.7 2 13.7 3.2 V9.6 Q13.7 10.8 12.5 10.8 H1.2 Q0 10.8 0 9.6Z" fill="#868e96"/></svg>
<svg style="left:17.5px;top:253.3px" width="10.8" height="12.6" viewBox="0 0 10.8 12.6"><circle cx="5.4" cy="3.2" r="3.2" fill="#868e96"/><path d="M0 10.6 Q0 6.2 2.6 5.8 Q5.4 8 8.2 5.8 Q10.8 6.2 10.8 10.6 Q10.8 12.6 8.8 12.6 H2 Q0 12.6 0 10.6Z" fill="#868e96"/></svg>
<svg style="left:248px;top:159px" width="13" height="11" viewBox="0 0 13 11"><path fill-rule="evenodd" d="M0 1.2 Q0 0 1.2 0 H11.8 Q13 0 13 1.2 V9.8 Q13 11 11.8 11 H1.2 Q0 11 0 9.8Z M1 2.6 V4.4 H4 V2.6Z M5 2.6 V4.4 H8 V2.6Z M9 2.6 V4.4 H12 V2.6Z M1 5.4 V7.2 H4 V5.4Z M5 5.4 V7.2 H8 V5.4Z M9 5.4 V7.2 H12 V5.4Z M1 8.2 V10 H4 V8.2Z M5 8.2 V10 H8 V8.2Z M9 8.2 V10 H12 V8.2Z" fill="#212529"/></svg>
<svg style="left:248px;top:551.2px" width="13" height="11" viewBox="0 0 13 11"><path fill-rule="evenodd" d="M0 1.2 Q0 0 1.2 0 H11.8 Q13 0 13 1.2 V9.8 Q13 11 11.8 11 H1.2 Q0 11 0 9.8Z M1 2.6 V4.4 H4 V2.6Z M5 2.6 V4.4 H8 V2.6Z M9 2.6 V4.4 H12 V2.6Z M1 5.4 V7.2 H4 V5.4Z M5 5.4 V7.2 H8 V5.4Z M9 5.4 V7.2 H12 V5.4Z M1 8.2 V10 H4 V8.2Z M5 8.2 V10 H8 V8.2Z M9 8.2 V10 H12 V8.2Z" fill="#212529"/></svg>
<svg style="left:230px;top:348px" width="16" height="11.6" viewBox="0 0 16 11.6"><path d="M2.4 0.5 H15.5 V9.6 Q15.5 11.1 14 11.1 H2 Q0.5 11.1 0.5 9.6 V2 H2.4" fill="none" stroke="#4c5156" stroke-width="1"/><path d="M2.4 0.5 V9.6 Q2.4 11 1.4 11" fill="none" stroke="#4c5156" stroke-width="1"/><rect x="4.6" y="2.8" width="3.8" height="3" fill="none" stroke="#4c5156" stroke-width="1"/><path d="M10 2.8 H13.6 M10 5.2 H13.6 M4.2 7.8 H8.6 M10 7.8 H13.6 M4.2 9.4 H8.6 M10 9.4 H13.6" stroke="#6a7076" stroke-width="0.9" fill="none"/></svg>
<svg style="left:248.9px;top:401.3px" width="12.2" height="13.6" viewBox="0 0 12.2 13.6"><path d="M6.1 1.3 Q9.6 1.8 9.6 6 Q9.6 9.4 11.7 11.2 H0.5 Q2.6 9.4 2.6 6 Q2.6 1.8 6.1 1.3Z" fill="none" stroke="#212529" stroke-width="1"/><path d="M6.1 0.2 V1.4" stroke="#212529" stroke-width="1.2"/><path d="M4.6 11.6 Q6.1 14.2 7.6 11.6Z" fill="#212529"/></svg>
<svg style="left:248.4px;top:444.8px" width="7.6" height="8.6" viewBox="0 0 7.6 8.6"><circle cx="3.8" cy="2.2" r="2.2" fill="#212529"/><path d="M0 7.4 Q0 4.2 1.8 4 Q3.8 5.4 5.8 4 Q7.6 4.2 7.6 7.4 Q7.6 8.6 6.4 8.6 H1.2 Q0 8.6 0 7.4Z" fill="#212529"/></svg>
<svg style="left:1111.7px;top:109px" width="12.6" height="10.2" viewBox="0 0 12.6 10.2"><path d="M5 0.8 H2.6 Q0.8 0.8 0.8 2.6 V7.6 Q0.8 9.4 2.6 9.4 H5" fill="none" stroke="#7ccbe2" stroke-width="1.6"/><path d="M3.6 3.4 H7.6 V0.6 L12.4 5.1 L7.6 9.6 V6.8 H3.6Z" fill="#7ccbe2"/></svg>
<svg style="left:105.5px;top:603.8px" width="5.6" height="8.6" viewBox="0 0 5.6 8.6"><path d="M4.8 0.6 L1 4.3 L4.8 8" fill="none" stroke="#b3b9bf" stroke-width="1.6"/></svg>
<svg style="left:1174.4px;top:95.2px" width="7" height="4" viewBox="0 0 7 4"><path d="M0 4 L3.5 0 L7 4Z" fill="#505050"/></svg>
<svg style="left:1130.8px;top:604px" width="9.6" height="5.8" viewBox="0 0 9.6 5.8"><path d="M0.8 5 L4.8 1.2 L8.8 5" fill="none" stroke="#fff" stroke-width="1.9"/></svg>
<svg style="left:1160.7px;top:608.4px" width="12.5" height="12.5" viewBox="0 0 12.5 12.5"><rect x="0" y="0" width="4.3" height="12.5" fill="#b6b6b6"/><rect x="7.9" y="0" width="4.4" height="12.5" fill="#b6b6b6"/></svg>
<svg style="left:590px;top:411.5px" width="13" height="20" viewBox="0 0 13 20"><path d="M0.6 0.8 V15.4 L4 12.2 L6.4 18 L8.6 17 L6.2 11.4 H10.8Z" fill="#fff" stroke="#1a1a24" stroke-width="1" stroke-linejoin="round"/></svg>
<svg style="left:416px;top:453.5px" width="16.5" height="22" viewBox="0 0 16.5 22"><path d="M5.6 12.4 V2 Q5.6 0.6 6.9 0.6 Q8.2 0.6 8.2 2 V8 Q8.2 6.6 9.5 6.6 Q10.8 6.6 10.8 8.2 V9 Q10.8 7.6 12 7.6 Q13.2 7.6 13.2 9 V10 Q13.2 8.8 14.4 8.8 Q15.6 8.8 15.6 10.2 V15 Q15.6 21 10.4 21 H9 Q6 21 4.4 18.4 L0.8 13 Q0.2 11.6 1.6 11.2 Q2.8 11 3.6 12.2 L5.6 14.6Z" fill="#fff" stroke="#1a1a24" stroke-width="1" stroke-linejoin="round"/><path d="M8.2 8 V12 M10.8 9 V12 M13.2 10 V12.4" stroke="#1a1a24" stroke-width="0.9" fill="none"/></svg>
<span class="t" style="left:15.00px;top:102.17px;font-size:16.83px;line-height:25px;font-weight:400;color:#ffffff;letter-spacing:0.092px;">Timetable</span>
<span class="t" style="left:1128.50px;top:104.84px;font-size:13.46px;line-height:20px;font-weight:400;color:#8bd0e4;letter-spacing:0.000px;transform:scaleX(0.9683);transform-origin:0 0;">ravi</span>
<span class="t" style="left:36.00px;top:153.34px;font-size:13.46px;line-height:20px;font-weight:400;color:#868e96;letter-spacing:0.021px;">Dashboard</span>
<span class="t" style="left:36.00px;top:201.94px;font-size:13.46px;line-height:20px;font-weight:400;color:#868e96;letter-spacing:0.000px;transform:scaleX(0.9864);transform-origin:0 0;">Personal Time Table</span>
<span class="t" style="left:36.00px;top:250.54px;font-size:13.46px;line-height:20px;font-weight:400;color:#868e96;letter-spacing:0.054px;">Student Details</span>
<span class="t" style="left:264.60px;top:155.94px;font-size:13.46px;line-height:20px;font-weight:700;color:#212529;letter-spacing:0.036px;">Classes Today: Wed-18-Jan-2023</span>
<span class="t" style="left:260.00px;top:216.94px;font-size:13.46px;line-height:20px;font-weight:700;color:#212529;letter-spacing:0.059px;">Unit Code</span>
<span class="t" style="left:522.00px;top:216.94px;font-size:13.46px;line-height:20px;font-weight:700;color:#212529;letter-spacing:0.000px;transform:scaleX(0.9832);transform-origin:0 0;">Starts</span>
<span class="t" style="left:742.00px;top:216.94px;font-size:13.46px;line-height:20px;font-weight:700;color:#212529;letter-spacing:0.000px;transform:scaleX(0.9121);transform-origin:0 0;">Ends</span>
<span class="t" style="left:962.00px;top:216.94px;font-size:13.46px;line-height:20px;font-weight:700;color:#212529;letter-spacing:0.090px;">Venue</span>
<span class="t" style="left:260.50px;top:260.24px;font-size:13.46px;line-height:20px;font-weight:400;color:#212529;letter-spacing:0.000px;">1</span>
<span class="t" style="left:522.00px;top:260.24px;font-size:13.46px;line-height:20px;font-weight:400;color:#212529;letter-spacing:0.000px;transform:scaleX(0.9642);transform-origin:0 0;">18:00:00</span>
<span class="t" style="left:742.00px;top:260.24px;font-size:13.46px;line-height:20px;font-weight:400;color:#212529;letter-spacing:0.000px;transform:scaleX(0.9642);transform-origin:0 0;">19:00:00</span>
<span class="t" style="left:962.00px;top:260.24px;font-size:13.46px;line-height:20px;font-weight:400;color:#212529;letter-spacing:0.000px;transform:scaleX(0.8918);transform-origin:0 0;">Class</span>
<span class="t" style="left:250.00px;top:345.34px;font-size:13.46px;line-height:20px;font-weight:400;color:#212529;letter-spacing:0.000px;transform:scaleX(0.9699);transform-origin:0 0;">News Feed</span>
<span class="t" style="left:266.20px;top:399.24px;font-size:13.46px;line-height:20px;font-weight:700;color:#ffffff;letter-spacing:0.000px;transform:scaleX(0.9907);transform-origin:0 0;">Recent Notices</span>
<span class="t" style="left:256.50px;top:441.21px;font-size:10.94px;line-height:16px;font-weight:700;color:#212529;letter-spacing:0.008px;">admin</span>
<span class="t" style="left:288.75px;top:441.21px;font-size:10.94px;line-height:16px;font-weight:400;color:#212529;letter-spacing:0.122px;">-posted a new notice</span>
<span class="t" style="left:252.75px;top:462.46px;font-size:10.94px;line-height:16px;font-weight:400;color:#212529;letter-spacing:0.000px;transform:scaleX(0.9182);transform-origin:0 0;">MEETING</span>
<span class="t" style="left:248.00px;top:497.52px;font-size:9.31px;line-height:14px;font-weight:400;color:#666c72;letter-spacing:0.123px;">Date:2023-01-18</span>
<span class="t" style="left:264.90px;top:548.24px;font-size:13.46px;line-height:20px;font-weight:700;color:#212529;letter-spacing:0.085px;">My tasks Today: Wed</span>
<span class="t" style="left:260.00px;top:608.59px;font-size:13.46px;line-height:20px;font-weight:700;color:#212529;letter-spacing:0.127px;">Activity</span>
<span class="t" style="left:554.00px;top:608.59px;font-size:13.46px;line-height:20px;font-weight:700;color:#212529;letter-spacing:0.000px;transform:scaleX(0.9832);transform-origin:0 0;">Starts</span>
<span class="t" style="left:852.00px;top:608.59px;font-size:13.46px;line-height:20px;font-weight:700;color:#212529;letter-spacing:0.000px;transform:scaleX(0.9121);transform-origin:0 0;">Ends</span>
<span class="t" style="left:4.50px;top:616.20px;font-size:10.09px;line-height:15px;font-weight:400;color:#3a2a14;letter-spacing:0.282px;">localhost/time/index.php#</span>
<span class="t" style="left:123.75px;top:36.23px;font-size:11.74px;line-height:18px;font-weight:400;color:#3a3026;letter-spacing:0.365px;">localhost</span>
<span class="t" style="left:173.00px;top:36.23px;font-size:11.74px;line-height:18px;font-weight:400;color:#6f5f4a;letter-spacing:0.309px;">/time/index.php#</span>
<span class="t" style="left:38.75px;top:6.70px;font-size:10.09px;line-height:15px;font-weight:400;color:#45321a;letter-spacing:0.214px;-webkit-mask-image:linear-gradient(90deg,#000 88%,transparent 100%);">localhost / 127.0.0.1 / time / clas</span>
<span class="t" style="left:246.50px;top:6.70px;font-size:10.09px;line-height:15px;font-weight:400;color:#2e2419;letter-spacing:0.140px;">Timetable companion</span>
<span class="t" style="left:255.50px;top:66.00px;font-size:10.09px;line-height:15px;font-weight:400;color:#4a3f31;letter-spacing:0.000px;transform:scaleX(0.8548);transform-origin:0 0;">PY</span>
<span class="t" style="left:301.50px;top:66.00px;font-size:10.09px;line-height:15px;font-weight:400;color:#4a3f31;letter-spacing:0.922px;">git</span>
<span class="t" style="left:349.75px;top:66.00px;font-size:10.09px;line-height:15px;font-weight:400;color:#4a3f31;letter-spacing:0.078px;">its</span>
<span class="t" style="left:423.50px;top:66.00px;font-size:10.09px;line-height:15px;font-weight:400;color:#4a3f31;letter-spacing:0.148px;">url</span>
<span class="t" style="left:581.50px;top:66.00px;font-size:10.09px;line-height:15px;font-weight:400;color:#4a3f31;letter-spacing:0.000px;transform:scaleX(0.9663);transform-origin:0 0;">Go</span>
<span class="t" style="left:880.50px;top:66.00px;font-size:10.09px;line-height:15px;font-weight:400;color:#4a3f31;letter-spacing:0.000px;">K</span>
<span class="t" style="left:921.00px;top:66.00px;font-size:10.09px;line-height:15px;font-weight:400;color:#4a3f31;letter-spacing:0.000px;">B</span>
<span class="t" style="left:962.00px;top:66.00px;font-size:10.09px;line-height:15px;font-weight:400;color:#4a3f31;letter-spacing:0.000px;">M</span>
<span class="t" style="left:1006.00px;top:66.00px;font-size:10.09px;line-height:15px;font-weight:400;color:#4a3f31;letter-spacing:0.000px;">N</span>
<span class="t" style="left:1048.00px;top:66.00px;font-size:10.09px;line-height:15px;font-weight:400;color:#4a3f31;letter-spacing:0.000px;">A</span>
<span class="t" style="left:1090.00px;top:66.00px;font-size:10.09px;line-height:15px;font-weight:400;color:#4a3f31;letter-spacing:0.000px;">P</span>
<span class="t" style="left:1130.00px;top:66.00px;font-size:10.09px;line-height:15px;font-weight:400;color:#4a3f31;letter-spacing:0.000px;">I</span>
<span class="t" style="left:1109.00px;top:38.30px;font-size:10.09px;line-height:15px;font-weight:400;color:#3f5c94;letter-spacing:0.000px;transform:scaleX(0.9360);transform-origin:0 0;">Paused</span>
</body>
</html>
